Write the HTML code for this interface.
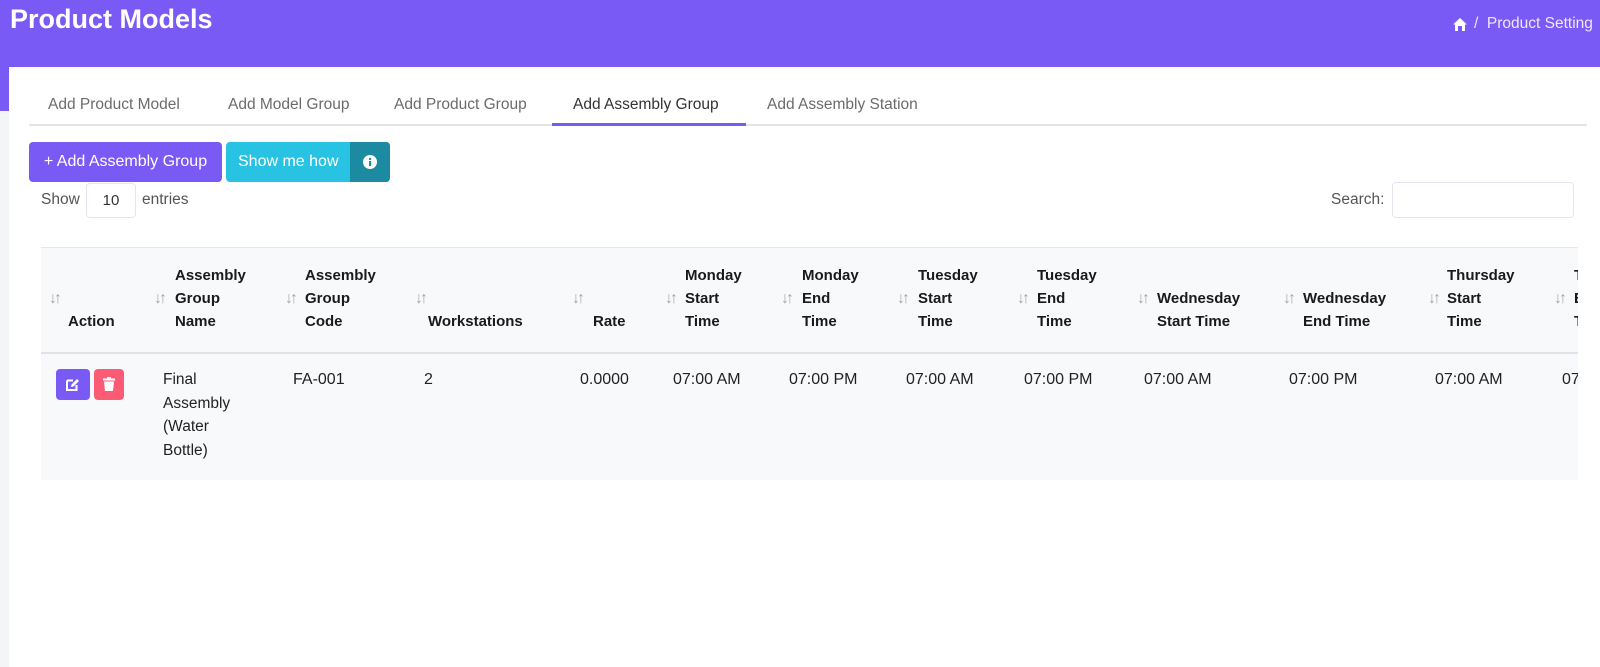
<!DOCTYPE html>
<html><head><meta charset="utf-8"><style>
*{margin:0;padding:0;box-sizing:border-box}
body{width:1600px;height:630px;overflow:hidden;background:#f3f5f7;font-family:"Liberation Sans",sans-serif;position:relative;color:#222}
.a{position:absolute;white-space:nowrap}
.hd{position:absolute;left:0;top:0;width:1600px;height:67px;background:#7a5af5}
.strip{position:absolute;left:0;top:67px;width:9px;height:44px;background:#7a5af5}
.card{position:absolute;left:9px;top:67px;width:1600px;height:600px;background:#fff;border-radius:8px 0 0 0}
.tab{font-size:15.5px;color:#6b6b6b;top:96px}
.th{font-size:15px;font-weight:bold;color:#1a1a1a;line-height:23px}
.ar{font-size:16px;color:#a8a8a8;letter-spacing:-3px;line-height:23px}
.td{font-size:16px;color:#222;top:363px;line-height:23.5px}
</style></head><body>
<div class="hd"></div><div class="strip"></div>
<div class="a" style="left:10px;top:4px;font-size:27px;font-weight:bold;color:#fff">Product Models</div>
<svg class="a" style="left:1452px;top:17px" width="16" height="15" viewBox="0 0 16 15"><path d="M8 1 L1 7.5 H3 V14 H13 V7.5 H15 Z" fill="#fff"/><rect x="6" y="9" width="4" height="5" fill="#7a5af5"/></svg>
<div class="a" style="left:1474px;top:15px;font-size:15.5px;color:#ece8ff">/&nbsp; Product Setting</div>
<div class="card"></div>
<div class="a tab" style="left:48px">Add Product Model</div>
<div class="a tab" style="left:228px">Add Model Group</div>
<div class="a tab" style="left:394px">Add Product Group</div>
<div class="a tab" style="left:573px;color:#333">Add Assembly Group</div>
<div class="a tab" style="left:767px">Add Assembly Station</div>
<div class="a" style="left:29px;top:124px;width:1558px;height:2px;background:#e4e4e4"></div>
<div class="a" style="left:552px;top:123px;width:194px;height:3px;background:#7a5af5"></div>
<div class="a" style="left:29px;top:142px;width:193px;height:40px;background:#7a5af5;border-radius:4px;color:#fff;font-size:16px;line-height:40px;text-align:center">+ Add Assembly Group</div>
<div class="a" style="left:226px;top:142px;width:164px;height:40px;background:#28c2e2;border-radius:4px;overflow:hidden;color:#fff;font-size:16px;line-height:40px"><span style="padding-left:12px">Show me how</span><div style="position:absolute;left:124px;top:0;width:40px;height:40px;background:#1c8aa1"><svg style="position:absolute;left:13px;top:13px" width="14" height="14" viewBox="0 0 14 14"><circle cx="7" cy="7" r="7" fill="#fff"/><rect x="6" y="6" width="2.2" height="5" fill="#1c8aa1"/><circle cx="7.1" cy="4" r="1.2" fill="#1c8aa1"/></svg></div></div>
<div class="a" style="left:41px;top:191px;font-size:15.5px;color:#555">Show</div>
<div class="a" style="left:86px;top:183px;width:50px;height:35px;border:1px solid #e3e6ef;border-radius:4px;font-size:15px;line-height:33px;text-align:center;color:#333">10</div>
<div class="a" style="left:142px;top:191px;font-size:15.5px;color:#555">entries</div>
<div class="a" style="left:1331px;top:191px;font-size:15.5px;color:#555">Search:</div>
<div class="a" style="left:1392px;top:182px;width:182px;height:36px;border:1px solid #e3e6ef;border-radius:4px"></div>
<div class="a" style="left:41px;top:247px;width:1537px;height:233px;background:#f8f9fa;border-top:1px solid #e6e8eb;overflow:hidden">
<div class="a" style="left:0;top:104px;width:1537px;height:2px;background:#dfe2e6"></div>
</div>
<div style="position:absolute;left:0;top:0;width:1578px;height:630px;overflow:hidden">
<div class="a ar" style="left:49px;top:287px">↓↑</div><div class="a th" style="left:68px;top:310px">Action</div>
<div class="a ar" style="left:154px;top:287px">↓↑</div><div class="a th" style="left:175px;top:264px">Assembly<br>Group<br>Name</div>
<div class="a ar" style="left:285px;top:287px">↓↑</div><div class="a th" style="left:305px;top:264px">Assembly<br>Group<br>Code</div>
<div class="a ar" style="left:415px;top:287px">↓↑</div><div class="a th" style="left:428px;top:310px">Workstations</div>
<div class="a ar" style="left:572px;top:287px">↓↑</div><div class="a th" style="left:593px;top:310px">Rate</div>
<div class="a ar" style="left:665px;top:287px">↓↑</div><div class="a th" style="left:685px;top:264px">Monday<br>Start<br>Time</div>
<div class="a ar" style="left:781px;top:287px">↓↑</div><div class="a th" style="left:802px;top:264px">Monday<br>End<br>Time</div>
<div class="a ar" style="left:897px;top:287px">↓↑</div><div class="a th" style="left:918px;top:264px">Tuesday<br>Start<br>Time</div>
<div class="a ar" style="left:1017px;top:287px">↓↑</div><div class="a th" style="left:1037px;top:264px">Tuesday<br>End<br>Time</div>
<div class="a ar" style="left:1137px;top:287px">↓↑</div><div class="a th" style="left:1157px;top:287px">Wednesday<br>Start Time</div>
<div class="a ar" style="left:1283px;top:287px">↓↑</div><div class="a th" style="left:1303px;top:287px">Wednesday<br>End Time</div>
<div class="a ar" style="left:1428px;top:287px">↓↑</div><div class="a th" style="left:1447px;top:264px">Thursday<br>Start<br>Time</div>
<div class="a ar" style="left:1554px;top:287px">↓↑</div><div class="a th" style="left:1574px;top:264px">Thursday<br>End<br>Time</div>
<div class="a" style="left:56px;top:369px;width:34px;height:31px;background:#7a5af5;border-radius:4px"><svg style="position:absolute;left:10px;top:9px" width="14" height="13" viewBox="0 0 14 13"><path d="M1 2.5 H7 M1 2.5 V12 H10.5 V7" stroke="#fff" stroke-width="2" fill="none"/><path d="M5 9 L5.5 6.5 L11 1 L13 3 L7.5 8.5 Z" fill="#fff"/></svg></div>
<div class="a" style="left:94px;top:369px;width:30px;height:31px;background:#fb5b74;border-radius:4px"><svg style="position:absolute;left:9px;top:8px" width="12" height="14" viewBox="0 0 12 14"><rect x="0" y="1.5" width="12" height="2" fill="#fff"/><rect x="4" y="0" width="4" height="2" fill="#fff"/><path d="M1 4.5 H11 L10 14 H2 Z" fill="#fff"/></svg></div>
<div class="a td" style="left:163px;top:368px;font-size:15.5px">Final<br>Assembly<br>(Water<br>Bottle)</div>
<div class="a td" style="left:293px;top:368px">FA-001</div>
<div class="a td" style="left:424px;top:368px">2</div>
<div class="a td" style="left:580px;top:368px">0.0000</div>
<div class="a td" style="left:673px;top:368px">07:00 AM</div>
<div class="a td" style="left:789px;top:368px">07:00 PM</div>
<div class="a td" style="left:906px;top:368px">07:00 AM</div>
<div class="a td" style="left:1024px;top:368px">07:00 PM</div>
<div class="a td" style="left:1144px;top:368px">07:00 AM</div>
<div class="a td" style="left:1289px;top:368px">07:00 PM</div>
<div class="a td" style="left:1435px;top:368px">07:00 AM</div>
<div class="a td" style="left:1562px;top:368px">07:00 PM</div>
</div>
</body></html>
